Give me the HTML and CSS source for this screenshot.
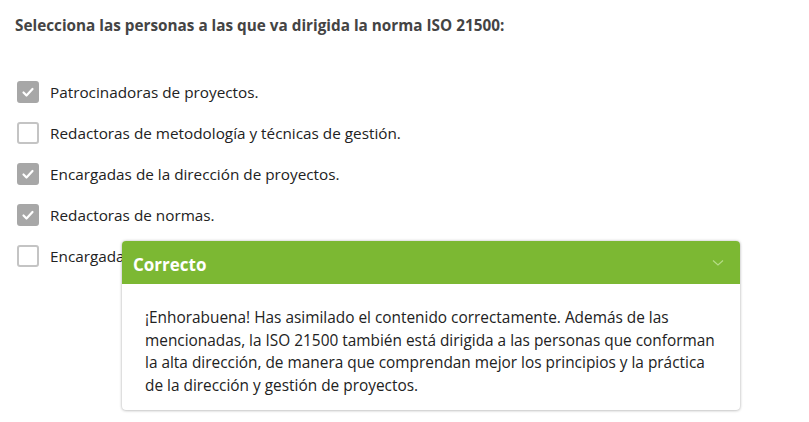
FILE: index.html
```html
<!DOCTYPE html>
<html lang="es">
<head>
<meta charset="utf-8">
<link rel="stylesheet" href="styles.css">
</head>
<body>
<div class="page">
  <h1 class="title">Selecciona las personas a las que va dirigida la norma ISO 21500:</h1>
  <ul class="options">
    <li class="option"><span class="box checked"><svg viewBox="0 0 22 22" width="22" height="22"><path d="M6.5 11.5 L9.5 14.5 L15.5 8" fill="none" stroke="#fff" stroke-width="2.2" stroke-linecap="round" stroke-linejoin="round"/></svg></span><span class="label">Patrocinadoras de proyectos.</span></li>
    <li class="option"><span class="box"></span><span class="label">Redactoras de metodología y técnicas de gestión.</span></li>
    <li class="option"><span class="box checked"><svg viewBox="0 0 22 22" width="22" height="22"><path d="M6.5 11.5 L9.5 14.5 L15.5 8" fill="none" stroke="#fff" stroke-width="2.2" stroke-linecap="round" stroke-linejoin="round"/></svg></span><span class="label">Encargadas de la dirección de proyectos.</span></li>
    <li class="option"><span class="box checked"><svg viewBox="0 0 22 22" width="22" height="22"><path d="M6.5 11.5 L9.5 14.5 L15.5 8" fill="none" stroke="#fff" stroke-width="2.2" stroke-linecap="round" stroke-linejoin="round"/></svg></span><span class="label">Redactoras de normas.</span></li>
    <li class="option"><span class="box"></span><span class="label">Encargadas de la alta dirección.</span></li>
  </ul>
  <div class="feedback">
    <div class="fb-head">
      <span class="fb-title">Correcto</span>
      <svg class="chev" viewBox="0 0 12 8" width="12" height="8"><path d="M1 1.5 L6 6 L11 1.5" fill="none" stroke="#b5dc86" stroke-width="1.2"/></svg>
    </div>
    <div class="fb-body">¡Enhorabuena! Has asimilado el contenido correctamente. Además de las mencionadas, la ISO 21500 también está dirigida a las personas que conforman la alta dirección, de manera que comprendan mejor los principios y la práctica de la dirección y gestión de proyectos.</div>
  </div>
</div>
</body>
</html>
```

FILE: styles.css
```css
* { box-sizing: border-box; }
html, body { margin: 0; padding: 0; background: #fff; }
body { font-family: "Open Sans", "Noto Sans", sans-serif; color: #222; }
.page { position: relative; width: 809px; height: 422px; padding: 14px 0 0 15px; }
.title { margin: 0; font-size: 15.3px; font-weight: 700; color: #444; line-height: 22px; }
.options { list-style: none; margin: 45px 0 0 0; padding: 0; display: flex; flex-direction: column; gap: 19px; }
.option { display: flex; align-items: center; gap: 11px; height: 22px; padding-left: 2px; }
.box { width: 22px; height: 22px; border: 2px solid #c4c4c4; border-radius: 3px; background: #fff; display: flex; align-items: center; justify-content: center; flex: none; }
.box.checked { background: #a7a7a7; border-color: #a7a7a7; }
.box svg { flex: none; margin: -2px; }
.label { font-size: 15.3px; color: #222; white-space: nowrap; }
.feedback { position: absolute; left: 122px; top: 241px; width: 618px; height: 169px; background: #fff; border-radius: 4px; box-shadow: 0 0 3px rgba(0,0,0,0.25), 0 1px 3px rgba(0,0,0,0.12); overflow: hidden; }
.fb-head { height: 43px; background: #7cb833; display: flex; align-items: center; justify-content: space-between; padding: 4px 16px 0 11px; }
.fb-title { color: #fff; font-size: 17px; font-weight: 700; }
.chev { margin-top: -4px; }
.fb-body { padding: 23px 15px 12px 23px; font-size: 15.4px; line-height: 22.7px; color: #222; }
```
